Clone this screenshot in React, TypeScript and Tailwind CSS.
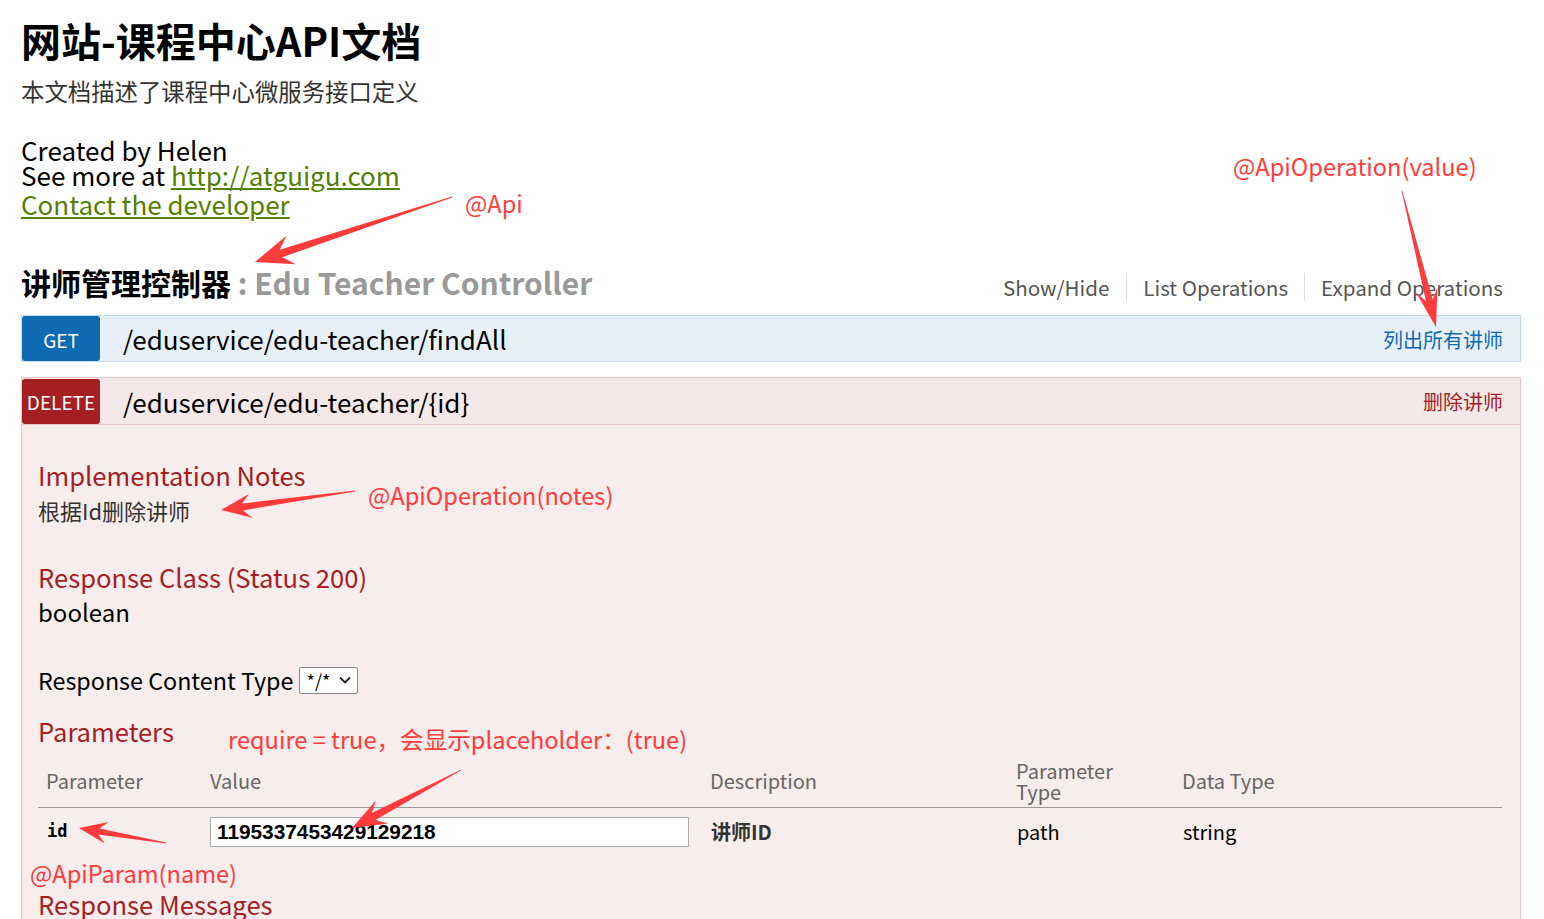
import type { ReactNode } from 'react'

const FONT = '"Noto Sans CJK SC", "Noto Sans", sans-serif'

type Pt = [number, number]

function arrowPoints(tail: Pt, tip: Pt, shaft = 7, headLen = 34, headW = 26): string {
  const dx = tip[0] - tail[0]
  const dy = tip[1] - tail[1]
  const len = Math.hypot(dx, dy)
  const ux = dx / len
  const uy = dy / len
  const nx = -uy
  const ny = ux
  const neck: Pt = [tip[0] - ux * headLen * 0.72, tip[1] - uy * headLen * 0.72]
  const barb: Pt = [tip[0] - ux * headLen, tip[1] - uy * headLen]
  const p = (b: Pt, w: number): string => `${b[0] + nx * w},${b[1] + ny * w}`
  return [
    p(tail, 0.4),
    p(neck, shaft / 2),
    p(barb, headW / 2),
    `${tip[0]},${tip[1]}`,
    p(barb, -headW / 2),
    p(neck, -shaft / 2),
    p(tail, -0.4),
  ].join(' ')
}

const ARROWS: { tail: Pt; tip: Pt; shaft?: number; headLen?: number; headW?: number }[] = [
  { tail: [452, 197], tip: [255, 262], shaft: 8, headLen: 38, headW: 30 },
  { tail: [1402, 191], tip: [1436, 327], shaft: 7, headLen: 38, headW: 22 },
  { tail: [355, 491], tip: [221, 510], shaft: 7, headLen: 30, headW: 24 },
  { tail: [461, 770], tip: [352, 828], shaft: 8, headLen: 34, headW: 26 },
  { tail: [166, 843], tip: [79, 828], shaft: 6, headLen: 28, headW: 22 },
]

function Note({ className, children }: { className: string; children: ReactNode }) {
  return (
    <span className={`absolute whitespace-nowrap text-[23.6px] leading-[30px] text-[#ff3b3b] ${className}`}>
      {children}
    </span>
  )
}

function SectionTitle({ children }: { children: ReactNode }) {
  return <h4 className="text-[25.6px] leading-[32px] text-[#a41e22]">{children}</h4>
}

export default function App() {
  return (
    <div className="relative h-[919px] w-[1544px] overflow-hidden bg-white" style={{ fontFamily: FONT }}>
      <div className="w-[1521px] pl-[21px] pt-[16px]">
        <h1 className="text-[40px] font-bold leading-[48px] text-black">网站-课程中心API文档</h1>
        <p className="mt-[11px] text-[23.4px] leading-[32px] text-[#333]">本文档描述了课程中心微服务接口定义</p>

        <div className="mt-[30px] text-[26px] leading-[25px] text-black">
          <div>Created by Helen</div>
          <div>
            See more at{' '}
            <a href="#" className="text-[#547f00] underline">
              http://atguigu.com
            </a>
          </div>
        </div>
        <a href="#" className="block w-max text-[26px] leading-[33px] text-[#547f00] underline">
          Contact the developer
        </a>

        <div className="mt-[42px] flex items-end justify-between">
          <h2 className="text-[30px] font-bold leading-[40px] text-black">
            讲师管理控制器<span className="text-[#999]"> : Edu Teacher Controller</span>
          </h2>
          <ul className="mb-[1px] flex pr-[18px] text-[20.6px] leading-[28px] text-[#555]">
            <li className="pr-[17px]">Show/Hide</li>
            <li className="border-l border-[#ddd] px-[16px]">List Operations</li>
            <li className="border-l border-[#ddd] pl-[16px]">Expand Operations</li>
          </ul>
        </div>

        <div className="mt-[13px] flex h-[47px] items-center border border-[#c3d9ec] bg-[#e7f0f7]">
          <span className="flex h-[45px] w-[78px] items-center justify-center rounded-[3px] bg-[#0f6ab4] pt-[3px] text-[19px] text-white">
            GET
          </span>
          <span className="ml-[23px] text-[26px] text-black">/eduservice/edu-teacher/findAll</span>
          <span className="ml-auto pr-[17px] pt-[2px] text-[20px] text-[#0f6ab4]">列出所有讲师</span>
        </div>

        <div className="mt-[15px] flex h-[48px] items-center border border-[#e8c6c7] bg-[#f5e8e8]">
          <span className="flex h-[45px] w-[78px] items-center justify-center rounded-[3px] bg-[#a41e22] pt-[3px] text-[19px] text-white">
            DELETE
          </span>
          <span className="ml-[23px] text-[26px] text-black">/eduservice/edu-teacher/{'{id}'}</span>
          <span className="ml-auto pr-[17px] pt-[2px] text-[20px] text-[#a41e22]">删除讲师</span>
        </div>

        <div className="h-[500px] border-x border-[#e8c6c7] bg-[#f7eded] pl-[16px] pr-[18px] pt-[34px]">
          <SectionTitle>Implementation Notes</SectionTitle>
          <p className="mt-[4px] text-[22px] leading-[30px] text-[#333]">根据Id删除讲师</p>

          <div className="mt-[36px]">
            <SectionTitle>Response Class (Status 200)</SectionTitle>
          </div>
          <p className="mt-[4px] text-[24px] leading-[30px] text-black">boolean</p>

          <div className="mt-[38px] flex items-center gap-[6px] text-[23.3px] leading-[30px] text-black">
            <span>Response Content Type</span>
            <span className="flex h-[27px] w-[59px] items-center justify-between rounded-[2px] border border-[#888] bg-white pl-[6px] pr-[6px] text-[18px]">
              */*
              <svg width="12" height="8" viewBox="0 0 12 8" fill="none" stroke="#222" strokeWidth="1.8">
                <path d="M1 1.5 6 6.5 11 1.5" />
              </svg>
            </span>
          </div>

          <div className="mt-[20px]">
            <SectionTitle>Parameters</SectionTitle>
          </div>

          <div className="mt-[7px] grid h-[54px] grid-cols-[172px_500px_306px_166px_1fr] items-center border-b border-[#999] text-[20px] leading-[21px] text-[#666]">
            <span className="pl-[8px]">Parameter</span>
            <span>Value</span>
            <span>Description</span>
            <span>
              Parameter
              <br />
              Type
            </span>
            <span>Data Type</span>
          </div>
          <div className="grid h-[48px] grid-cols-[172px_500px_306px_166px_1fr] items-center text-[20px] text-black">
            <span
              className="pl-[9px] text-[17px] font-bold"
              style={{ fontFamily: '"DejaVu Sans Mono", "Liberation Mono", monospace' }}
            >
              id
            </span>
            <span className="flex h-[30px] w-[479px] items-center border border-[#aaa] bg-white pl-[6px]">
              <span className="text-[20.8px] font-bold" style={{ fontFamily: '"Liberation Sans", Arial, sans-serif' }}>
                1195337453429129218
              </span>
            </span>
            <span className="pl-[1px] font-bold text-[#333]">讲师ID</span>
            <span className="pl-[1px]">path</span>
            <span className="pl-[1px]">string</span>
          </div>

          <div className="mt-[32px]">
            <SectionTitle>Response Messages</SectionTitle>
          </div>
        </div>
      </div>

      <Note className="left-[465px] top-[188px]">@Api</Note>
      <Note className="left-[1233px] top-[151px]">@ApiOperation(value)</Note>
      <Note className="left-[368px] top-[480px]">@ApiOperation(notes)</Note>
      <Note className="left-[228px] top-[724px]">require = true，会显示placeholder：(true)</Note>
      <Note className="left-[30px] top-[858px]">@ApiParam(name)</Note>

      <svg className="pointer-events-none absolute left-0 top-0" width="1544" height="919">
        {ARROWS.map((a, i) => (
          <polygon key={i} points={arrowPoints(a.tail, a.tip, a.shaft, a.headLen, a.headW)} fill="#ff3b3b" />
        ))}
      </svg>
    </div>
  )
}
